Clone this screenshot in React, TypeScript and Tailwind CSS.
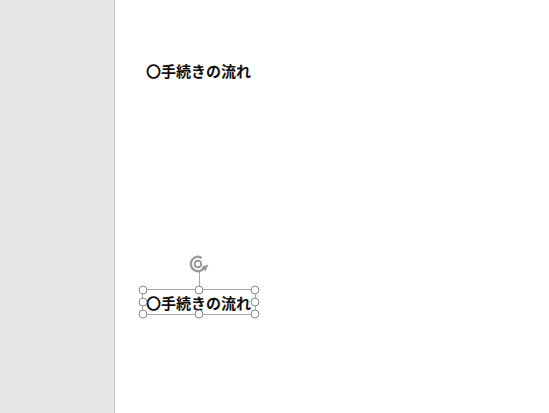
const handles = [
  "left-0 top-0",
  "left-1/2 top-0",
  "left-full top-0",
  "left-0 top-1/2",
  "left-full top-1/2",
  "left-0 top-full",
  "left-1/2 top-full",
  "left-full top-full",
];

function RotateIcon() {
  return (
    <svg width="22" height="22" viewBox="0 0 20 20" className="absolute left-1/2 top-[-37px] -translate-x-1/2">
      <circle cx="9" cy="10" r="6.5" fill="none" stroke="#9a9a9a" strokeWidth="2.2" strokeDasharray="32 9" transform="rotate(20 9 10)" />
      <circle cx="9" cy="10" r="3" fill="none" stroke="#9a9a9a" strokeWidth="1.8" />
      <path d="M12.5 12.5 L18.5 10.5 L16 16.5 Z" fill="#9a9a9a" />
    </svg>
  );
}

export default function App() {
  return (
    <div className="flex h-[413px] w-[549px] overflow-hidden bg-white" style={{ fontFamily: '"Noto Sans CJK JP", sans-serif' }}>
      <aside className="w-[115px] shrink-0 border-r border-[#c8c8c8] bg-[#e6e6e6]" />
      <main className="relative flex-1 bg-white">
        <div className="absolute left-[31px] top-[60px] text-[15px] font-bold leading-[22px] text-[#111]">〇手続きの流れ</div>

        <div className="absolute left-[27px] top-[289px] h-[26px] w-[114px] border border-[#a8a8a8]">
          <div className="absolute bottom-full left-1/2 h-[20px] w-px bg-[#a8a8a8]" />
          <RotateIcon />
          <div className="absolute left-[3px] top-[2px] whitespace-nowrap text-[15px] font-bold leading-[22px] text-[#111]">〇手続きの流れ</div>
          {handles.map((h) => (
            <span key={h} className={`absolute ${h} h-[9px] w-[9px] -translate-x-1/2 -translate-y-1/2 rounded-full border border-[#8a8a8a] bg-white`} />
          ))}
        </div>
      </main>
    </div>
  );
}
